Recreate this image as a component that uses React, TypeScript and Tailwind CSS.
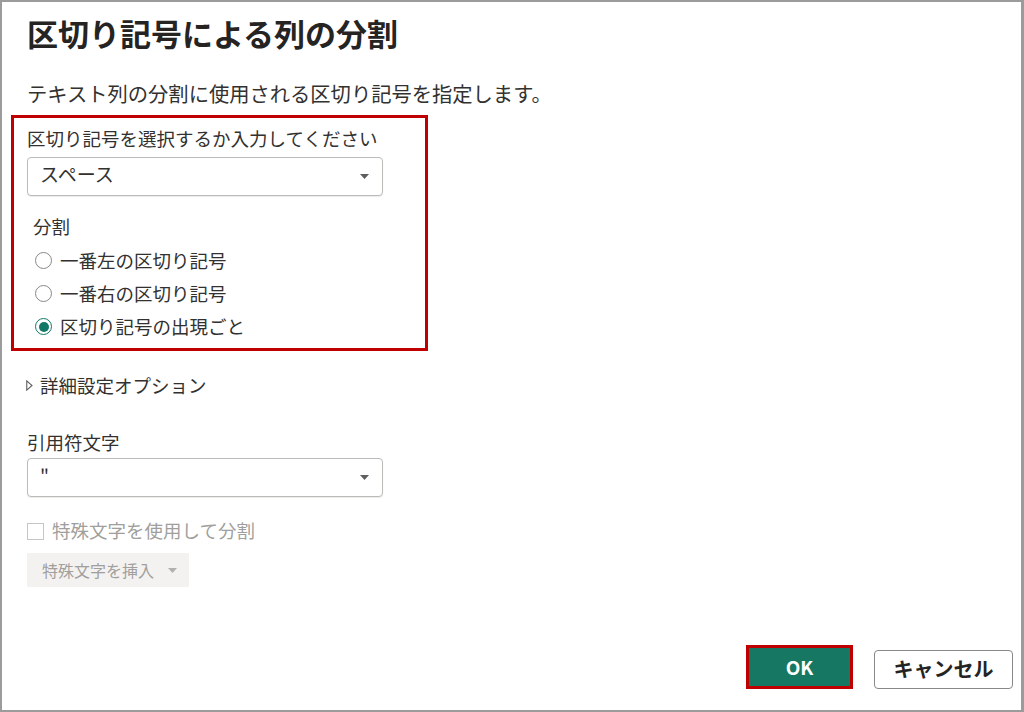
import React from "react";

const font = { fontFamily: '"Noto Sans CJK JP", "Noto Sans", sans-serif' };

function Caret({ color = "#605e5c" }: { color?: string }) {
  return (
    <svg width="9" height="5" viewBox="0 0 9 5" className="shrink-0">
      <path d="M0 0 L9 0 L4.5 5 Z" fill={color} />
    </svg>
  );
}

function Select({ value }: { value: string }) {
  return (
    <div className="flex h-[39px] w-[356px] items-center justify-between rounded-[4px] border border-[#bdbbb8] bg-white pl-[12px] pr-[13px] shadow-[0_1px_1px_rgba(0,0,0,0.08)]">
      <span className="mb-[5px] text-[19px] leading-[24px] text-[#323130]">{value}</span>
      <Caret />
    </div>
  );
}

function Radio({ checked, label }: { checked?: boolean; label: string }) {
  return (
    <div className="flex h-[33px] items-center">
      <div
        className={
          checked
            ? "flex h-[17px] w-[17px] items-center justify-center rounded-full border-[1.5px] border-[#117865] bg-white"
            : "h-[17px] w-[17px] rounded-full border-[1.5px] border-[#8a8886] bg-white"
        }
      >
        {checked && <div className="h-[10px] w-[10px] rounded-full bg-[#117865]" />}
      </div>
      <span className="mb-[2px] ml-[8px] text-[18.5px] leading-[24px] text-[#323130]">{label}</span>
    </div>
  );
}

export default function App() {
  return (
    <div
      style={font}
      className="flex h-[712px] w-[1024px] flex-col border-2 border-r-[3px] border-[#9b9b9b] bg-white pl-[25px] pr-[8px] pt-[11px] pb-[21px]"
    >
      <h1 className="text-[31px] font-bold leading-[40px] text-[#252423]">
        区切り記号による列の分割
      </h1>
      <p className="mt-[27px] text-[20.3px] leading-[26px] text-[#323130]">
        テキスト列の分割に使用される区切り記号を指定します。
      </p>

      <div className="ml-[-16px] mt-[9px] w-[417px] border-[3px] border-[#c00000] pb-[5px] pl-[13px] pt-[8px]">
        <div className="text-[18.5px] leading-[24px] text-[#323130]">
          区切り記号を選択するか入力してください
        </div>
        <div className="mt-[7px]">
          <Select value="スペース" />
        </div>
        <div className="ml-[6px] mt-[18px] text-[18.5px] leading-[24px] text-[#323130]">分割</div>
        <div className="ml-[8px] mt-[6px] flex flex-col">
          <Radio label="一番左の区切り記号" />
          <Radio label="一番右の区切り記号" />
          <Radio checked label="区切り記号の出現ごと" />
        </div>
      </div>

      <div className="mt-[22px] flex h-[24px] items-center">
        <svg width="7" height="11" viewBox="0 0 7 11" className="ml-[-1px] shrink-0">
          <path d="M0.75 0.9 L6 5.5 L0.75 10.1 Z" fill="none" stroke="#605e5c" strokeWidth="1.1" />
        </svg>
        <span className="ml-[7px] text-[18.5px] leading-[24px] text-[#323130]">詳細設定オプション</span>
      </div>

      <div className="mt-[33px] text-[18.5px] leading-[24px] text-[#323130]">引用符文字</div>
      <div className="mt-[4px]">
        <Select value={'"'} />
      </div>

      <div className="mt-[22px] flex h-[24px] items-center">
        <div className="h-[17px] w-[17px] border border-[#c8c6c4] bg-white" />
        <span className="mb-[2px] ml-[8px] text-[18.5px] leading-[24px] text-[#a19f9d]">特殊文字を使用して分割</span>
      </div>

      <div className="mt-[10px] flex h-[34px] w-[162px] items-center bg-[#f3f2f1] pl-[15px]">
        <span className="text-[16px] leading-[20px] text-[#a19f9d]">特殊文字を挿入</span>
        <span className="ml-[14px]">
          <Caret color="#b3b0ad" />
        </span>
      </div>

      <div className="flex-1" />

      <div className="flex items-end justify-end gap-[21px]">
        <div className="border-[3px] border-[#c00000]">
          <div className="flex h-[38px] w-[101px] items-center justify-center bg-[#167863]">
            <span className="text-[19px] font-bold leading-[24px] text-white">OK</span>
          </div>
        </div>
        <div className="flex h-[39px] w-[139px] items-center justify-center rounded-[4px] border border-[#8a8886] bg-white">
          <span className="mb-[2px] text-[20px] font-bold leading-[24px] text-[#252423]">キャンセル</span>
        </div>
      </div>
    </div>
  );
}
